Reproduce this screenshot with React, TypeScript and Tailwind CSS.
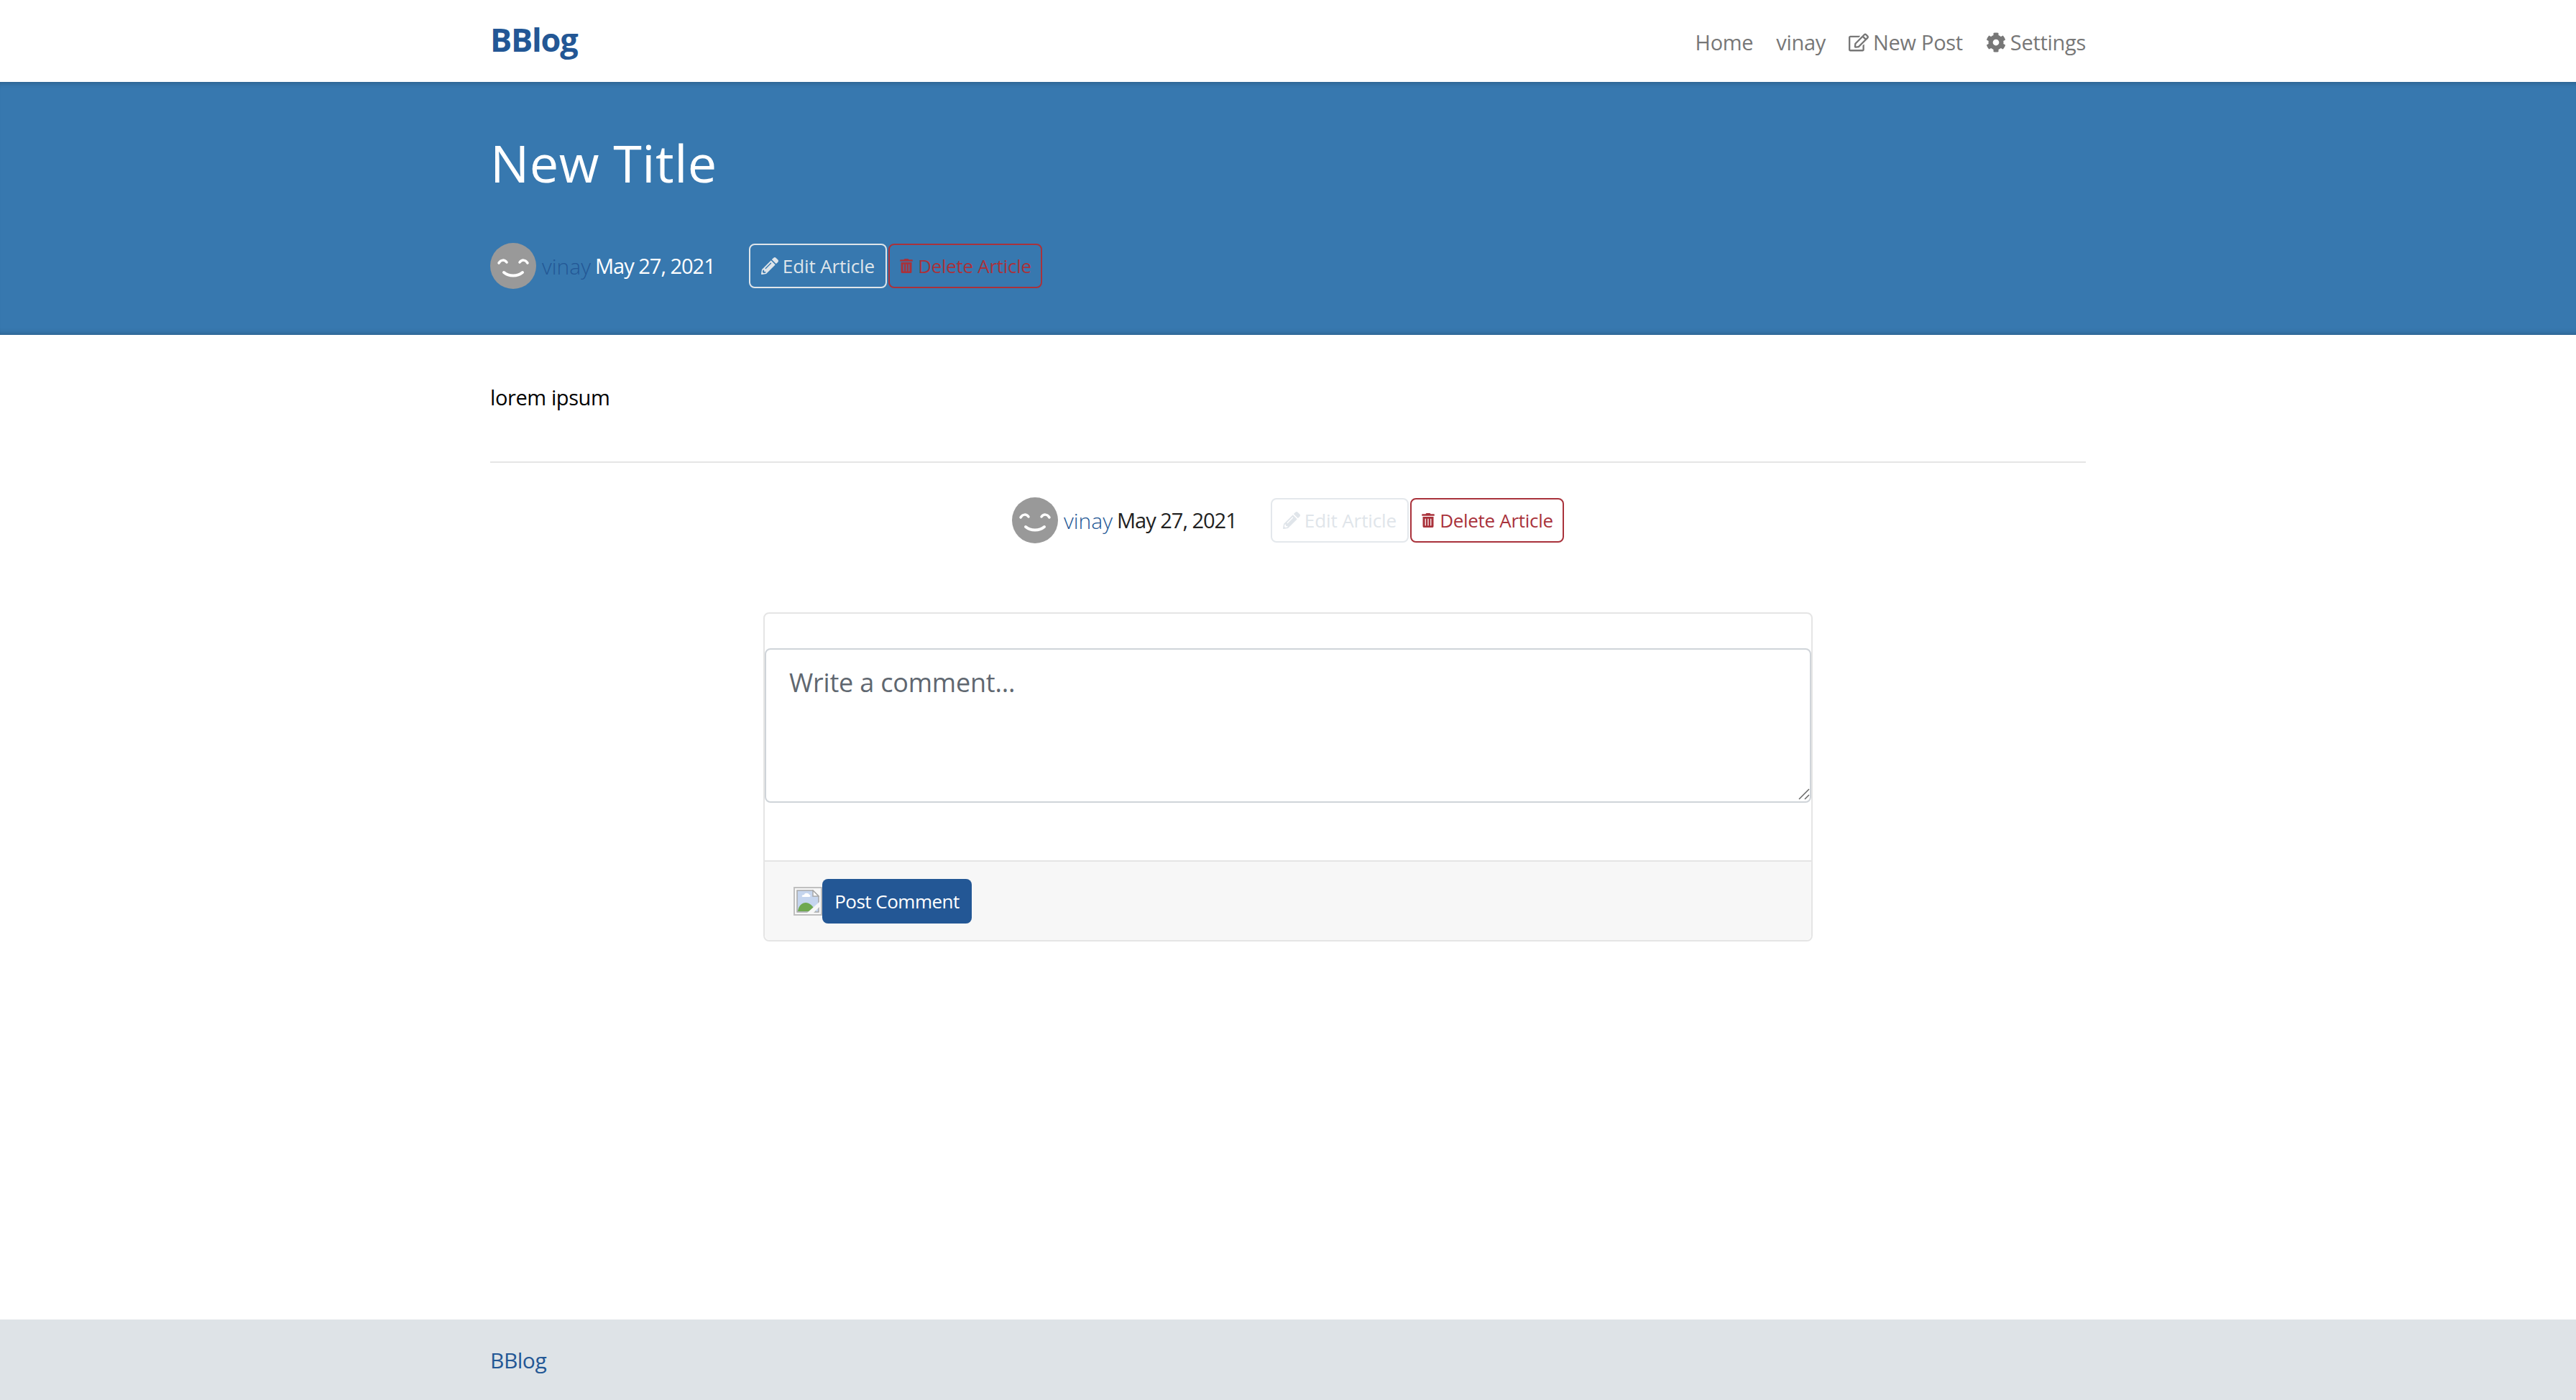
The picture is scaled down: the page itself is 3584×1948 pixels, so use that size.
import { FaCog, FaPencilAlt, FaRegEdit, FaTrashAlt } from 'react-icons/fa';

const Avatar = () => (
  <svg viewBox="0 0 64 64" className="h-16 w-16 shrink-0">
    <circle cx="32" cy="32" r="32" fill="#999999" />
    <path d="M12 28c3-5 8-5 11-1M41 27c3-4 8-4 11 1" fill="none" stroke="#fff" strokeWidth="3.5" strokeLinecap="round" />
    <path d="M19 41c7 6 19 6 26 0" fill="none" stroke="#fff" strokeWidth="4" strokeLinecap="round" />
  </svg>
);

const BrokenImage = () => (
  <span className="flex h-10 w-10 shrink-0 items-center justify-center border-2 border-[#c0c0c0]">
    <svg viewBox="0 0 32 32" className="h-8 w-8">
      <path d="M1 1h22l8 8v22H1z" fill="#c5d5ee" stroke="#a8a8a8" strokeWidth="1.5" />
      <path d="M23 1v8h8z" fill="#fff" stroke="#a8a8a8" strokeWidth="1.5" />
      <path d="M2 30c1-8 6-12 11-12s10 4 14 12z" fill="#6fa84f" />
      <path d="M11 7c0-3 6-3 7 0 2 0 2 3 0 3h-9c-2 0-2-3 2-3z" fill="#fff" />
      <path d="M15 32L32 17v7L24 32z" fill="#f6f6f6" />
    </svg>
  </span>
);

type ArticleMetaProps = {
  dateClass: string;
  editClass: string;
};

const ArticleMeta = ({ dateClass, editClass }: ArticleMetaProps) => (
  <div className="flex items-center">
    <Avatar />
    <a className="ml-2 text-[30px] font-light text-[#235795]">vinay</a>
    <span className={`ml-1.5 w-[166px] text-[29px] tracking-[-1px] whitespace-nowrap ${dateClass}`}>May 27, 2021</span>
    <button className={`ml-12 flex h-[62px] w-[192px] items-center justify-center gap-1.5 rounded-lg border-2 text-[26px] tracking-[-0.1px] ${editClass}`}>
      <FaPencilAlt className="h-6 w-6" />
      Edit Article
    </button>
    <button className="ml-0.5 flex h-[62px] w-[214px] items-center justify-center gap-1.5 rounded-lg border-2 border-[#a9323b] text-[26px] tracking-[-0.3px] text-[#a9323b]">
      <FaTrashAlt className="h-5 w-5" />
      Delete Article
    </button>
  </div>
);

export default function App() {
  return (
    <div className="flex min-h-screen flex-col bg-white font-['Open_Sans',sans-serif] text-black">
      <nav className="flex h-[114px] items-center justify-between px-[682px] pb-1">
        <a className="text-[45px] font-bold tracking-[-1.2px] text-[#235795]">BBlog</a>
        <ul className="flex items-center gap-8 pt-2 text-[29px] tracking-[-0.3px] text-[#777777]">
          <li>Home</li>
          <li>vinay</li>
          <li className="flex items-center gap-1.5">
            <FaRegEdit className="h-7 w-7" />
            New Post
          </li>
          <li className="flex items-center gap-1.5">
            <FaCog className="h-7 w-7" />
            Settings
          </li>
        </ul>
      </nav>

      <header className="bg-[#3778af] px-[682px] pt-16 pb-16 shadow-[inset_0_8px_8px_-8px_rgba(0,0,0,0.3),inset_0_-8px_8px_-8px_rgba(0,0,0,0.3)]">
        <h1 className="mb-16 text-[72px] leading-[96px] tracking-[0.5px] text-white">New Title</h1>
        <ArticleMeta dateClass="text-white" editClass="border-[#dfe5ea] text-[#dfe5ea]" />
      </header>

      <main className="px-[682px] pt-[63px]">
        <p className="text-[29px] leading-[48px] tracking-[-0.4px]">lorem ipsum</p>
        <hr className="mt-[65px] border-t-2 border-[#e5e5e5]" />
        <div className="mt-12 flex justify-center">
          <ArticleMeta dateClass="text-[#222222]" editClass="border-[#e4e8ec] text-[#e0e5ea]" />
        </div>

        <form className="mx-auto mt-24 w-[1460px] rounded-lg border-2 border-[#e5e5e5]">
          <div className="pt-12 pb-20">
            <div className="relative">
              <textarea
                className="block h-[215px] w-full resize-none rounded-lg border-2 border-[#cfd4d9] px-8 pt-[18px] pb-4 text-[36px] leading-[56px] tracking-[-0.2px] outline-none placeholder:text-[#5f6770] placeholder:opacity-100"
                placeholder="Write a comment..."
              />
              <svg viewBox="0 0 16 16" className="absolute right-0.5 bottom-1 h-4 w-4">
                <path d="M1 15L15 1M9 15l6-6" fill="none" stroke="#666666" strokeWidth="1.5" />
              </svg>
            </div>
          </div>
          <div className="flex items-center rounded-b-lg border-t-2 border-[#e5e5e5] bg-[#f7f7f7] pt-6 pr-10 pb-[23px] pl-10">
            <BrokenImage />
            <button className="h-[62px] w-[208px] rounded-lg bg-[#235795] text-[26px] tracking-[-0.5px] text-white">
              Post Comment
            </button>
          </div>
        </form>
      </main>

      <footer className="mt-auto flex h-28 items-center bg-[#dee3e7] px-[682px]">
        <a className="text-[30px] tracking-[-0.5px] text-[#235795]">BBlog</a>
      </footer>
    </div>
  );
}
